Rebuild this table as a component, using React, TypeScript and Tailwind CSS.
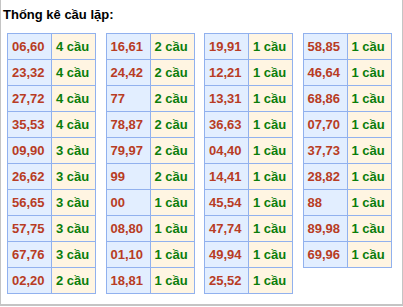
import React from 'react';

type Row = [string, number];

const tables: Row[][] = [
  [
    ['06,60', 4], ['23,32', 4], ['27,72', 4], ['35,53', 4], ['09,90', 3],
    ['26,62', 3], ['56,65', 3], ['57,75', 3], ['67,76', 3], ['02,20', 2],
  ],
  [
    ['16,61', 2], ['24,42', 2], ['77', 2], ['78,87', 2], ['79,97', 2],
    ['99', 2], ['00', 1], ['08,80', 1], ['01,10', 1], ['18,81', 1],
  ],
  [
    ['19,91', 1], ['12,21', 1], ['13,31', 1], ['36,63', 1], ['04,40', 1],
    ['14,41', 1], ['45,54', 1], ['47,74', 1], ['49,94', 1], ['25,52', 1],
  ],
  [
    ['58,85', 1], ['46,64', 1], ['68,86', 1], ['07,70', 1], ['37,73', 1],
    ['28,82', 1], ['88', 1], ['89,98', 1], ['69,96', 1],
  ],
];

const CauTable: React.FC<{ rows: Row[] }> = ({ rows }) => (
  <div className="grid grid-cols-[43px_43px] auto-rows-[25px] gap-px p-px bg-[#91b1ee] w-[89px]">
    {rows.map(([pair, count]) => (
      <React.Fragment key={pair}>
        <div className="bg-[#e2eeff] pl-[4px] flex items-center text-[#b83c24]">{pair}</div>
        <div className="bg-[#fff5e2] pl-[4px] flex items-center text-[#0b7d0b]">{count} cầu</div>
      </React.Fragment>
    ))}
  </div>
);

export default function App() {
  return (
    <div
      className="w-[403px] h-[306px] bg-white border-x border-b-2 border-[#c4c4c4] pl-[2px]"
      style={{ fontFamily: '"Liberation Sans", Arial, sans-serif' }}
    >
      <h1 className="pt-[7px] text-[13px] leading-[15px] font-bold text-black">Thống kê cầu lặp:</h1>
      <div className="mt-[11px] ml-[4px] flex items-start gap-[9.5px] text-[13px] font-bold">
        {tables.map((rows, i) => (
          <CauTable key={i} rows={rows} />
        ))}
      </div>
    </div>
  );
}
